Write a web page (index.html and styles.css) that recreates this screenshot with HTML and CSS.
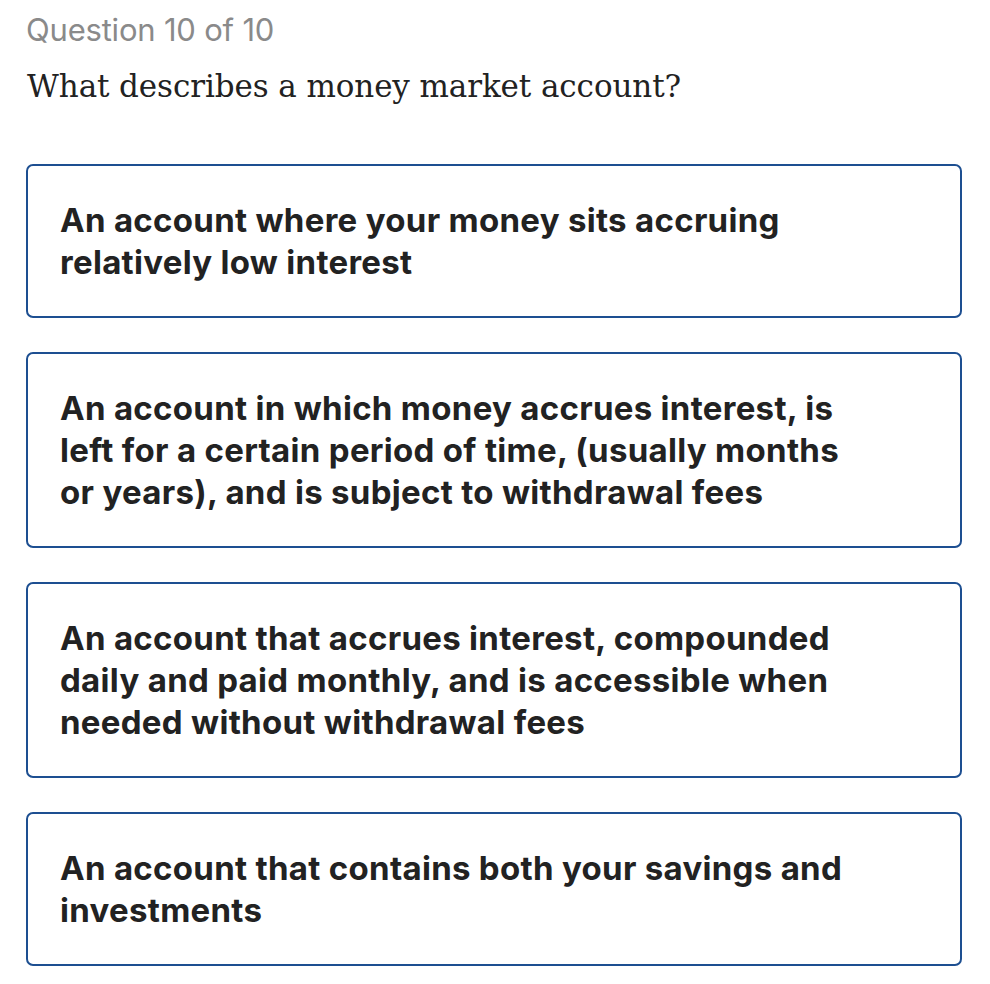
FILE: index.html
```html
<!DOCTYPE html>
<html lang="en">
<head>
    <meta charset="UTF-8">
    <meta name="viewport" content="width=device-width, initial-scale=1.0">
    <title>Quiz</title>
    <link rel="stylesheet" href="styles.css">
</head>
<body>
    <div class="quiz">
        <p class="counter">Question 10 of 10</p>
        <h2 class="question">What describes a money market account?</h2>

        <div class="answers">
            <button class="answer">An account where your money sits accruing relatively low interest</button>
            <button class="answer">An account in which money accrues interest, is left for a certain period of time, (usually months or years), and is subject to withdrawal fees</button>
            <button class="answer">An account that accrues interest, compounded daily and paid monthly, and is accessible when needed without withdrawal fees</button>
            <button class="answer">An account that contains both your savings and investments</button>
        </div>
    </div>
</body>
</html>
```

FILE: styles.css
```css
body { margin: 0; background: #fff; }
.quiz { padding: 12px 28px 20px 26px; }
.counter { margin: 0; font-family: "Inter", sans-serif; font-size: 31px; color: #8a8a8a; letter-spacing: -0.2px; line-height: 36px; }
.question { margin: 16px 0 0 1px; font-family: "DejaVu Serif", serif; font-weight: normal; font-size: 31px; color: #222; line-height: 44px; letter-spacing: -0.1px; }
.answers { display: flex; flex-direction: column; gap: 34px; margin-top: 56px; }
.answer {
    display: block; width: 100%; text-align: left; background: #fff;
    border: 2px solid #1d4f91; border-radius: 7px;
    padding: 33px 90px 33px 32px;
    font-family: "Inter", sans-serif; font-weight: 700; font-size: 33px; line-height: 42px;
    letter-spacing: 0.3px; color: #222; cursor: pointer;
}
```
